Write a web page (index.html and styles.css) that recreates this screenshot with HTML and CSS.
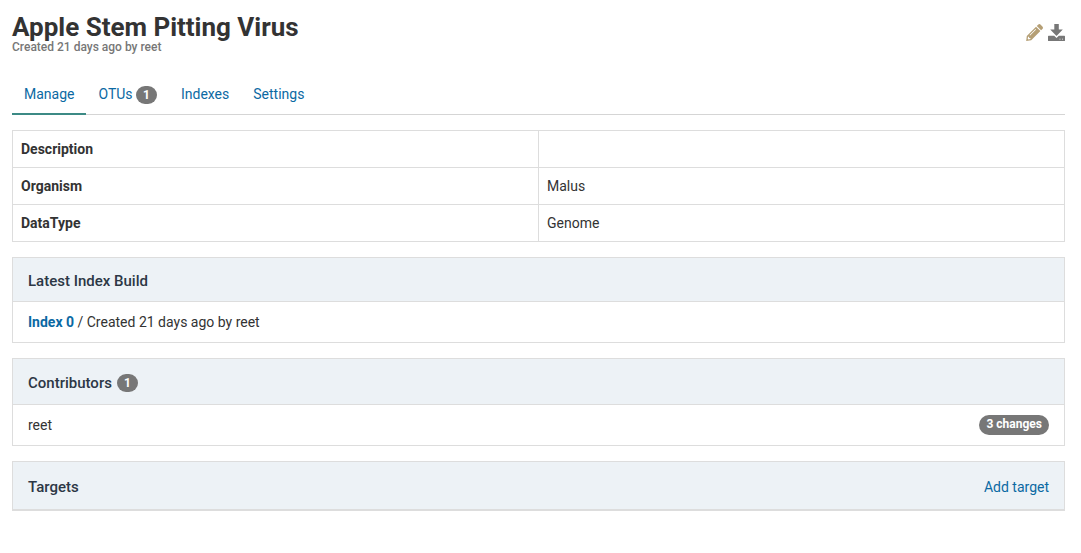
FILE: index.html
```html
<!DOCTYPE html>
<html lang="en">
<head>
<meta charset="utf-8">
<title>Apple Stem Pitting Virus</title>
<link rel="stylesheet" href="styles.css">
</head>
<body>
<main class="page">
  <header class="header">
    <div>
      <h1 class="title">Apple Stem Pitting Virus</h1>
      <p class="subtitle">Created 21 days ago by reet</p>
    </div>
    <div class="actions">
      <svg class="icon icon-edit" viewBox="0 0 17 17"><path fill-rule="evenodd" d="M12.100.7c.8-.8 1.800-.8 2.600 0l1.700 1.700c.8.8.8 1.800 0 2.600l-1.300 1.300-4.300-4.300zM10 2.800l4.400 4.300-9.200 9.200-5 .7.6-5zM9.500 4.900l-6 6 .6.6 6-6zM2.100 12.700l-.4 2 .7.7 2-.4v-1H3.100v-1.300z"/></svg>
      <svg class="icon" viewBox="0 0 17 17"><path fill-rule="evenodd" d="M6.300 0h4.500v5.600h4L8.500 12 2.200 5.600h4.100zM.6 11.800h5.600l2.300 2.100 2.300-2.100h5.600c.3 0 .6.3.6.6v4c0 .3-.3.6-.6.6H.6c-.3 0-.6-.3-.6-.6v-4c0-.3.3-.6.6-.6zm10.900 3v.8h1v-.8zm2.500 0v.8h1v-.8z"/></svg>
    </div>
  </header>
  <nav class="tabs">
    <a class="tab active">Manage</a>
    <a class="tab">OTUs <span class="badge">1</span></a>
    <a class="tab">Indexes</a>
    <a class="tab">Settings</a>
  </nav>
  <table class="details">
    <tr><th>Description</th><td></td></tr>
    <tr><th>Organism</th><td>Malus</td></tr>
    <tr><th>DataType</th><td>Genome</td></tr>
  </table>
  <section class="panel">
    <div class="panel-head index-head"><h2>Latest Index Build</h2></div>
    <div class="panel-row"><span><a class="strong">Index 0</a> / Created 21 days ago by reet</span></div>
  </section>
  <section class="panel">
    <div class="panel-head contributors-head"><h2>Contributors</h2><span class="badge">1</span></div>
    <div class="panel-row"><span>reet</span><span class="badge badge-changes">3 changes</span></div>
  </section>
  <section class="panel">
    <div class="panel-head targets-head"><h2>Targets</h2><a>Add target</a></div>
  </section>
</main>
</body>
</html>
```

FILE: styles.css
```css
* { box-sizing: border-box; }
body { margin: 0; background: #fff; color: #333; font: 14px/20px Roboto, sans-serif; }
h1, h2, p { margin: 0; }
a { color: #0b69a3; }
.page { padding: 12px 16px 0 12px; }
.header { display: flex; justify-content: space-between; height: 62px; }
.title { font-size: 26px; line-height: 30px; font-weight: 700; letter-spacing: -0.01px; }
.subtitle { font-size: 12px; line-height: 14px; font-weight: 500; color: #777; margin-top: -2px; }
.actions { display: flex; gap: 5px; padding-top: 12px; }
.icon { width: 17px; height: 17px; fill: #777; }
.icon-edit { fill: #b59f75; }
.tabs { display: flex; height: 41px; border-bottom: 1px solid #d5d5d5; }
.tab { padding: 10px 12px; height: 41px; white-space: nowrap; }
.active { border-bottom: 2px solid #3c8a85; }
.badge { display: inline-block; min-width: 10px; padding: 3px 7px; border-radius: 10px; background: #777; color: #fff; font-size: 12px; line-height: 12px; font-weight: 700; text-align: center; }
.badge-changes { padding: 3px 7px 5px 7.5px; }
.details { width: 100%; margin: 15px 0; border-collapse: collapse; table-layout: fixed; }
.details th, .details td { height: 37px; padding: 8px; border: 1px solid #ddd; text-align: left; }
.panel { border: 1px solid #ddd; margin-bottom: 15px; }
.panel-head { display: flex; align-items: center; padding: 0 15px; background: #edf2f6; border-bottom: 1px solid #ddd; gap: 5px; }
.panel-head h2 { font-size: 15px; line-height: 20px; font-weight: 500; color: #2c3745; }
.index-head { height: 44px; padding-top: 2px; }
.contributors-head { height: 46px; padding-top: 3px; }
.targets-head { height: 48px; padding-top: 2px; justify-content: space-between; }
.panel-row { display: flex; align-items: center; justify-content: space-between; height: 40px; padding: 0 15px; }
.strong { font-weight: 700; }
```
